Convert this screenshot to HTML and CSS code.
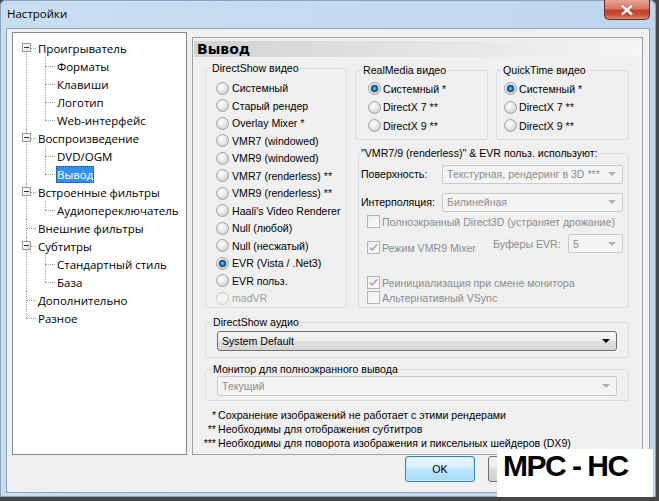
FILE: index.html
```html
<!DOCTYPE html>
<html lang="ru">
<head>
    <meta charset="UTF-8">
    <title>Настройки</title>
    <link rel="stylesheet" href="styles.css">
</head>
<body>
<div class="window">
    <div class="titlebar">
        <span class="title">Настройки</span>
        <span class="close">
            <svg width="14" height="12" viewBox="0 0 14 12">
                <path d="M2 1.5 L12 10.5 M12 1.5 L2 10.5" stroke="#6d2a22" stroke-width="4" stroke-opacity="0.45"/>
                <path d="M2 1.5 L12 10.5 M12 1.5 L2 10.5" stroke="#fff" stroke-width="2.4"/>
            </svg>
        </span>
    </div>

    <div class="dialog">
        <div class="main">
            <div class="treebox">
                <ul class="tree">
                    <li>
                        <div class="row"><span class="exp"></span><span class="label">Проигрыватель</span></div>
                        <ul>
                            <li><div class="row"><span class="label">Форматы</span></div></li>
                            <li><div class="row"><span class="label">Клавиши</span></div></li>
                            <li><div class="row"><span class="label">Логотип</span></div></li>
                            <li><div class="row"><span class="label">Web-интерфейс</span></div></li>
                        </ul>
                    </li>
                    <li>
                        <div class="row"><span class="exp"></span><span class="label">Воспроизведение</span></div>
                        <ul>
                            <li><div class="row"><span class="label">DVD/OGM</span></div></li>
                            <li><div class="row"><span class="label selected">Вывод</span></div></li>
                        </ul>
                    </li>
                    <li>
                        <div class="row"><span class="exp"></span><span class="label">Встроенные фильтры</span></div>
                        <ul>
                            <li><div class="row"><span class="label">Аудиопереключатель</span></div></li>
                        </ul>
                    </li>
                    <li><div class="row"><span class="label">Внешние фильтры</span></div></li>
                    <li>
                        <div class="row"><span class="exp"></span><span class="label">Субтитры</span></div>
                        <ul>
                            <li><div class="row"><span class="label">Стандартный стиль</span></div></li>
                            <li><div class="row"><span class="label">База</span></div></li>
                        </ul>
                    </li>
                    <li><div class="row"><span class="label">Дополнительно</span></div></li>
                    <li><div class="row"><span class="label">Разное</span></div></li>
                </ul>
            </div>

            <div class="page">
                <div class="page-title">Вывод</div>
                <div class="page-body">
                    <div class="group ds">
                        <div class="group-title">DirectShow видео</div>
                        <div class="opt"><span class="radio"></span>Системный</div>
                        <div class="opt"><span class="radio"></span>Старый рендер</div>
                        <div class="opt"><span class="radio"></span>Overlay Mixer *</div>
                        <div class="opt"><span class="radio"></span>VMR7 (windowed)</div>
                        <div class="opt"><span class="radio"></span>VMR9 (windowed)</div>
                        <div class="opt"><span class="radio"></span>VMR7 (renderless) **</div>
                        <div class="opt"><span class="radio"></span>VMR9 (renderless) **</div>
                        <div class="opt"><span class="radio"></span>Haali's Video Renderer</div>
                        <div class="opt"><span class="radio"></span>Null (любой)</div>
                        <div class="opt"><span class="radio"></span>Null (несжатый)</div>
                        <div class="opt"><span class="radio on"></span>EVR (Vista / .Net3)</div>
                        <div class="opt"><span class="radio"></span>EVR польз.</div>
                        <div class="opt off"><span class="radio"></span>madVR</div>
                    </div>

                    <div class="right-col">
                        <div class="pair">
                            <div class="group small rm">
                                <div class="group-title">RealMedia видео</div>
                                <div class="opt"><span class="radio on"></span>Системный *</div>
                                <div class="opt"><span class="radio"></span>DirectX 7 **</div>
                                <div class="opt"><span class="radio"></span>DirectX 9 **</div>
                            </div>
                            <div class="group small qt">
                                <div class="group-title">QuickTime видео</div>
                                <div class="opt"><span class="radio on"></span>Системный *</div>
                                <div class="opt"><span class="radio"></span>DirectX 7 **</div>
                                <div class="opt"><span class="radio"></span>DirectX 9 **</div>
                            </div>
                        </div>

                        <div class="group vmr">
                            <div class="group-title">"VMR7/9 (renderless)" &amp; EVR польз. используют:</div>
                            <div class="field">
                                <span class="field-name">Поверхность:</span>
                                <div class="combo grow"><span class="combo-text">Текстурная, рендеринг в 3D ***</span><span class="arrow"></span></div>
                            </div>
                            <div class="field">
                                <span class="field-name">Интерполяция:</span>
                                <div class="combo grow"><span class="combo-text">Билинейная</span><span class="arrow"></span></div>
                            </div>
                            <div class="check-row first"><span class="check"></span>Полноэкранный Direct3D (устраняет дрожание)</div>
                            <div class="check-row mixer">
                                <span class="check"><svg width="9" height="9" viewBox="0 0 9 9"><path d="M1 4.6 L3.4 7 L8 1.6" fill="none" stroke="#a2a2a2" stroke-width="1.5"/></svg></span>
                                Режим VMR9 Mixer
                                <div class="buffers">
                                    <span class="buffers-name">Буферы EVR:</span>
                                    <div class="combo buf"><span class="combo-text">5</span><span class="arrow"></span></div>
                                </div>
                            </div>
                            <div class="check-row reinit"><span class="check"><svg width="9" height="9" viewBox="0 0 9 9"><path d="M1 4.6 L3.4 7 L8 1.6" fill="none" stroke="#a2a2a2" stroke-width="1.5"/></svg></span>Реинициализация при смене монитора</div>
                            <div class="check-row"><span class="check"></span>Альтернативный VSync</div>
                        </div>
                    </div>

                    <div class="group wide audio">
                        <div class="group-title">DirectShow аудио</div>
                        <div class="combo active"><span class="combo-text">System Default</span><span class="arrow"></span></div>
                    </div>

                    <div class="group wide monitor">
                        <div class="group-title">Монитор для полноэкранного вывода</div>
                        <div class="combo"><span class="combo-text">Текущий</span><span class="arrow"></span></div>
                    </div>

                    <div class="notes">
                        <span class="star">*</span><span>Сохранение изображений не работает с этими рендерами</span>
                        <span class="star">**</span><span>Необходимы для отображения субтитров</span>
                        <span class="star">***</span><span>Необходимы для поворота изображения и пиксельных шейдеров (DX9)</span>
                    </div>
                </div>
            </div>
        </div>

        <div class="buttons">
            <button class="btn default">OK</button>
            <button class="btn"></button>
            <button class="btn"></button>
        </div>
    </div>

    <div class="stamp">MPC - HC</div>
</div>
</body>
</html>
```

FILE: styles.css
```css
* {
    box-sizing: border-box;
}
html, body {
    margin: 0;
}
body {
    width: 659px;
    height: 501px;
    overflow: hidden;
    background: #464646;
    font-family: "Liberation Sans", Arial, sans-serif;
    font-size: 10.6px;
    color: #000;
}

/* window frame */
.window {
    position: relative;
    width: 656px;
    height: 497px;
    display: flex;
    flex-direction: column;
    padding: 0 6px 4px;
    background: linear-gradient(to right, #cadef2, #bed6ee);
    border-radius: 6px 6px 0 0;
    box-shadow: inset 0 0 0 1px #8ba2bd;
}
.titlebar {
    height: 28px;
    display: flex;
    justify-content: space-between;
    align-items: flex-start;
}
.title {
    margin: 6px 0 0 1px;
    font-family: "Open Sans", sans-serif;
    font-size: 11.5px;
}
.close {
    width: 46px;
    height: 20px;
    display: flex;
    align-items: center;
    justify-content: center;
    border: 1px solid #6a2b26;
    border-top: none;
    border-radius: 0 0 5px 5px;
    background: linear-gradient(#e7a496 0%, #d9786a 45%, #c2412e 55%, #c9533f 80%, #dc8c70 100%);
}

.dialog {
    flex: 1;
    display: flex;
    flex-direction: column;
    background: #f0f0f0;
    border: 1px solid #8ea3bc;
}
.main {
    display: grid;
    grid-template-columns: 175px 451px;
    column-gap: 5px;
    padding: 3px 0 0 5px;
}

/* tree */
.treebox {
    height: 423px;
    background: #fff;
    border: 1px solid #828790;
    padding-top: 6px;
    font-family: "Open Sans", sans-serif;
    font-size: 11.5px;
}
.tree, .tree ul {
    list-style: none;
    margin: 0;
    padding: 0;
}
.tree ul, .tree li {
    position: relative;
}
.tree > li::before {
    content: "";
    position: absolute;
    left: 13px;
    top: 0;
    bottom: 0;
    border-left: 1px dotted #a0a0a0;
}
.tree > li:first-child::before {
    top: 9px;
}
.tree > li:last-child::before {
    bottom: auto;
    height: 9px;
}
.tree ul::before {
    content: "";
    position: absolute;
    left: 32px;
    top: 0;
    bottom: 9px;
    border-left: 1px dotted #a0a0a0;
}
.row {
    position: relative;
    height: 18px;
    display: flex;
    align-items: center;
    padding-left: 24px;
}
.tree ul .row {
    padding-left: 43px;
}
.row::before {
    content: "";
    position: absolute;
    left: 13px;
    top: 9px;
    width: 10px;
    border-top: 1px dotted #a0a0a0;
}
.tree ul .row::before {
    left: 32px;
}
.exp {
    position: absolute;
    left: 9px;
    top: 4px;
    width: 9px;
    height: 9px;
    border: 1px solid #9a9a9a;
    background: linear-gradient(135deg, #fff, #e2e2e2);
    z-index: 1;
}
.exp::after {
    content: "";
    position: absolute;
    left: 1px;
    top: 3px;
    width: 5px;
    height: 1px;
    background: #333;
}
.label {
    padding: 0 1px;
    line-height: 17px;
}
.label.selected {
    background: #3390f0;
    color: #fff;
    outline: 1px dotted #1b4570;
    outline-offset: -1px;
}

/* page */
.page {
    margin-top: 5px;
    height: 418px;
    border: 1px solid #a0a0a0;
    padding: 3px 1px 0;
}
.page-title {
    height: 16px;
    padding-left: 3px;
    background: linear-gradient(to right, #d2d2d2, #f5f5f5);
    font-family: "DejaVu Sans", sans-serif;
    font-weight: bold;
    font-size: 14px;
    line-height: 16px;
}
.page-body {
    display: grid;
    grid-template-columns: 142px 274px;
    column-gap: 8px;
    align-items: start;
    padding: 0 12px 0 11px;
}

/* group boxes: caption sits on the top border */
.group {
    border: 1px solid #d5dde3;
    border-radius: 3px;
}
.group-title {
    display: table;
    margin-top: -7px;
    padding: 0 1px;
    line-height: 13px;
    background: #f0f0f0;
    white-space: nowrap;
}
.opt {
    display: flex;
    align-items: center;
    gap: 3px;
    height: 17.5px;
    white-space: nowrap;
}
.opt.off {
    color: #a0a0a0;
}
.ds {
    margin-top: 11px;
    padding: 0 0 0 10px;
}
.ds .group-title {
    margin-left: -5px;
}
.ds .group-title + .opt {
    margin-top: 4.25px;
}
.right-col {
    margin-top: 13px;
}
.pair {
    display: grid;
    grid-template-columns: 133px 133px;
    column-gap: 8px;
}
.small {
    padding: 0 0 4px 12px;
}
.small .opt {
    height: 18.5px;
    gap: 2px;
}
.small .group-title + .opt {
    margin-top: 2.5px;
}
.rm .group-title {
    margin-left: -6px;
}
.small.qt {
    padding-left: 7px;
}
.qt .group-title {
    margin-left: -2px;
}

/* radio + check */
.radio {
    flex: none;
    width: 13px;
    height: 13px;
    border-radius: 50%;
    border: 1px solid #a2a2a2;
    background: radial-gradient(circle at 40% 35%, #fff 0, #f0f0f0 30%, #d4d4d4 75%, #c8c8c8 100%);
}
.radio.on {
    background:
        radial-gradient(circle, #7fd6fb 0, #2f88c4 1.5px, #1c4f80 3px, #2f6c9e 3.6px, transparent 4.2px),
        radial-gradient(circle at 40% 35%, #fff 0, #f0f0f0 30%, #d4d4d4 75%, #c8c8c8 100%);
}
.opt.off .radio {
    border-color: #cacaca;
    background: #f3f3f3;
}
.check {
    flex: none;
    width: 13px;
    height: 13px;
    display: flex;
    align-items: center;
    justify-content: center;
    border: 1px solid #b4b4b4;
    background: linear-gradient(135deg, #efefef, #fbfbfb);
}

/* vmr block */
.vmr {
    margin: 13px 0 0 3px;
    padding: 0 5px 2px 2px;
}
.vmr .group-title {
    margin-left: -1px;
}
.field {
    display: flex;
    align-items: center;
    height: 19px;
    white-space: nowrap;
}
.vmr .group-title + .field {
    margin-top: 4.5px;
}
.field + .field {
    margin-top: 9px;
}
.field-name {
    width: 81px;
    flex: none;
}
.check-row {
    display: flex;
    align-items: center;
    gap: 2px;
    height: 15px;
    margin-left: 6px;
    color: #8d8d8d;
    white-space: nowrap;
}
.check-row.first {
    margin-top: 2.5px;
}
.check-row.mixer {
    height: 19px;
    margin-top: 9px;
}
.check-row.reinit {
    margin-top: 18px;
}
.buffers {
    margin-left: auto;
    display: flex;
    align-self: flex-start;
    margin-top: -4px;
    align-items: center;
}
.buffers-name {
    width: 75px;
}

/* combo boxes */
.combo {
    display: flex;
    align-items: center;
    height: 19px;
    padding: 0 6px 0 4px;
    border: 1px solid #cacaca;
    border-radius: 2px;
    background: #f4f4f4;
    color: #8d8d8d;
    overflow: hidden;
}
.combo.grow {
    flex: 1;
}
.combo.buf {
    width: 55px;
}
.combo-text {
    white-space: nowrap;
    overflow: hidden;
}
.arrow {
    flex: none;
    margin-left: auto;
    width: 0;
    height: 0;
    border-left: 4px solid transparent;
    border-right: 4px solid transparent;
    border-top: 4px solid #b0b0b0;
}
.combo.active {
    color: #000;
    border-color: #707070;
    border-radius: 3px;
    background: linear-gradient(#f7f7f7, #ececec 50%, #e0e0e0 51%, #d6d6d6);
}
.combo.active .arrow {
    border-top-color: #000;
}
.wide {
    grid-column: 1 / -1;
}
.wide .group-title {
    margin-left: -5px;
}
.audio {
    margin-top: 14px;
    padding: 0 11px 6px;
}
.audio .combo, .monitor .combo {
    height: 20px;
}
.audio .combo {
    margin-top: 1.5px;
}
.monitor {
    margin-top: 11px;
    padding: 0 11px 4px;
}
.monitor .combo {
    margin-top: 0.5px;
}
.notes {
    grid-column: 1 / -1;
    margin: 6.5px 0 0 -7px;
    display: grid;
    grid-template-columns: 18px auto;
    column-gap: 2px;
    line-height: 14px;
}
.star {
    text-align: right;
}

/* buttons */
.buttons {
    display: flex;
    justify-content: flex-end;
    gap: 13px;
    margin-top: 1px;
    padding-right: 8px;
}
.btn {
    width: 70px;
    height: 26px;
    padding: 0;
    border: 1px solid #707070;
    border-radius: 3px;
    background: linear-gradient(#f2f2f2, #ebebeb 45%, #dddddd 50%, #cfcfcf);
    font-family: "Liberation Sans", Arial, sans-serif;
    font-size: 10.6px;
    color: #000;
}
.btn.default {
    border-color: #3c7fb1;
    background: linear-gradient(#eaf6fd, #d9f0fc 45%, #bee6fd 50%, #a7d9f5);
    box-shadow: inset 0 0 0 1px #c8e9fa;
}

/* caption pasted over the corner */
.stamp {
    position: absolute;
    left: 497px;
    top: 449px;
    width: 156px;
    height: 48px;
    padding-left: 6px;
    background: #fff;
    font-weight: bold;
    font-size: 30px;
    line-height: 34px;
    letter-spacing: -1.5px;
}
```
